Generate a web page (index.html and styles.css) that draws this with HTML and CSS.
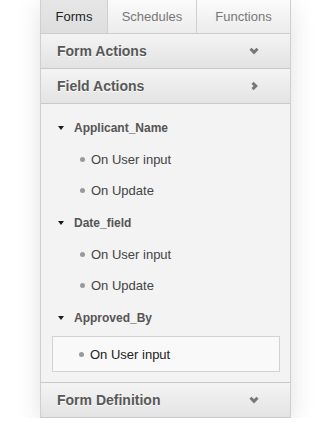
FILE: index.html
```html
<!DOCTYPE html>
<html lang="en">
  <head>
    <meta charset="UTF-8" />
    <meta name="viewport" content="width=device-width, initial-scale=1.0" />
    <title>Form Actions</title>
    <link rel="stylesheet" href="styles.css">
  </head>
  <body>
    <div class="panel">
      <div class="tabs">
        <div class="tab active">Forms</div>
        <div class="tab">Schedules</div>
        <div class="tab">Functions</div>
      </div>

      <div class="section-header">
        <span>Form Actions</span>
        <svg class="chevron" width="10" height="8" viewBox="0 0 10 8">
          <polyline points="1.5,1.8 5,5.3 8.5,1.8" />
        </svg>
      </div>

      <div class="section-header">
        <span>Field Actions</span>
        <svg class="chevron" width="10" height="10" viewBox="0 0 10 10">
          <polyline points="3.5,1.8 6.8,5 3.5,8.2" />
        </svg>
      </div>

      <div class="tree">
        <div class="field">Applicant_Name</div>
        <div class="event">On User input</div>
        <div class="event">On Update</div>

        <div class="field">Date_field</div>
        <div class="event">On User input</div>
        <div class="event">On Update</div>

        <div class="field">Approved_By</div>
        <div class="event selected">On User input</div>
      </div>

      <div class="section-header">
        <span>Form Definition</span>
        <svg class="chevron" width="10" height="8" viewBox="0 0 10 8">
          <polyline points="1.5,1.8 5,5.3 8.5,1.8" />
        </svg>
      </div>
    </div>
  </body>
</html>
```

FILE: styles.css
```css
body {
  margin: 0;
  font-family: "Liberation Sans", Arial, sans-serif;
  background-color: white;
}

.panel {
  width: 249px;
  margin-left: 40px;
  border-left: 1px solid #cfcfcf;
  border-right: 1px solid #cfcfcf;
  background-color: #f3f3f3;
  box-shadow: 0 6px 24px rgba(0, 0, 0, 0.12);
}

.tabs {
  display: flex;
  height: 33px;
  border-bottom: 1px solid #cccccc;
}

.tab {
  display: flex;
  align-items: center;
  justify-content: center;
  font-size: 13px;
  color: #777;
  background: linear-gradient(#fbfbfb, #ececec);
  border-left: 1px solid #cfcfcf;
}

.tab:nth-child(1) {
  width: 66px;
  border-left: none;
}

.tab:nth-child(2) {
  width: 88px;
}

.tab:nth-child(3) {
  flex: 1;
}

.tab.active {
  color: #222;
  background: linear-gradient(#e6e6e6, #dedede);
}

.section-header {
  display: flex;
  align-items: center;
  justify-content: space-between;
  height: 34px;
  padding: 0 31px 0 16px;
  border-bottom: 1px solid #c8c8c8;
  background: linear-gradient(#f4f4f4, #e3e3e3);
  font-size: 14px;
  font-weight: bold;
  color: #585858;
  text-shadow: 0 1px 0 #ffffff;
}

.chevron {
  fill: none;
  stroke: #777;
  stroke-width: 3;
}

.tree {
  padding: 7px 10px 10px 11px;
  background-color: #f3f3f3;
  border-bottom: 1px solid #c8c8c8;
}

.field {
  display: flex;
  align-items: center;
  gap: 10px;
  height: 33px;
  padding-left: 6px;
  font-size: 12px;
  font-weight: bold;
  color: #555;
}

.field::before {
  content: "";
  border-left: 3px solid transparent;
  border-right: 3px solid transparent;
  border-top: 4px solid #1a1a1a;
}

.event {
  display: flex;
  align-items: center;
  gap: 6px;
  height: 31px;
  padding-left: 28px;
  font-size: 13px;
  color: #444;
}

.event::before {
  content: "";
  width: 5px;
  height: 5px;
  border-radius: 50%;
  background-color: #9a9a9a;
}

.event.selected {
  height: 34px;
  margin-top: 2px;
  padding-left: 26px;
  border: 1px solid #d2d2d2;
  background-color: #f9f9f9;
  color: #222;
}
```
